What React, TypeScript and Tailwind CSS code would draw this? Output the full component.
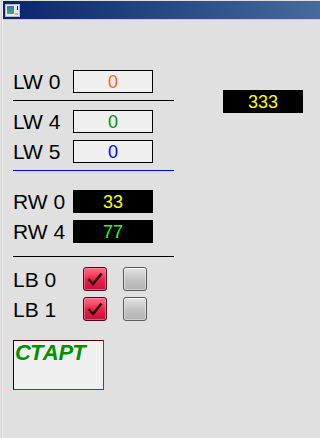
const font = { fontFamily: '"Liberation Sans", Arial, sans-serif' };

function TitleIcon() {
  return (
    <svg width="15" height="13" viewBox="0 0 15 13" className="block">
      <defs>
        <linearGradient id="ig" x1="0" y1="0" x2="0" y2="1">
          <stop offset="0" stopColor="#3a78a8" />
          <stop offset="1" stopColor="#4aa870" />
        </linearGradient>
      </defs>
      <rect x="0.5" y="0.5" width="14" height="12" fill="#e8e8ec" stroke="#b8bcc4" />
      <rect x="2" y="2" width="7" height="8" fill="url(#ig)" />
      <rect x="10" y="9" width="3" height="2" fill="#b0b4b8" />
      <rect x="12" y="2" width="1" height="4" fill="#102040" />
    </svg>
  );
}

function RedCheck() {
  return (
    <div className="w-[24px] h-[24px] rounded-[3px] border border-[#4a0a16] bg-gradient-to-b from-[#ff6a88] via-[#f0204c] to-[#c8103a] shadow-[inset_0_0_0_1px_rgba(255,160,180,0.5)] flex items-center justify-center">
      <svg width="20" height="20" viewBox="0 0 20 20">
        <path d="M3.5 10 L8 15 L16.5 4.5" fill="none" stroke="#22080c" strokeWidth="2.6" />
      </svg>
    </div>
  );
}

function GreyCheck() {
  return (
    <div className="w-[24px] h-[24px] rounded-[3px] border border-[#5a5a5a] bg-gradient-to-b from-[#e4e4e4] via-[#c4c4c4] to-[#b4b4b4] shadow-[inset_0_1px_0_#f8f8f8,inset_0_0_0_1px_rgba(255,255,255,0.4)]" />
  );
}

function Row({ label, children }: { label: string; children: React.ReactNode }) {
  return (
    <div className="flex items-center h-[23px]">
      <div className="w-[60px] text-[21px] leading-none text-black">{label}</div>
      {children}
    </div>
  );
}

function LightBox({ value, color }: { value: string; color: string }) {
  return (
    <div className="w-[80px] h-[23px] border border-black bg-[#f0f0f0] flex items-center justify-center text-[18px] leading-none">
      <span className={color}>{value}</span>
    </div>
  );
}

function DarkBox({ value, color }: { value: string; color: string }) {
  return (
    <div className="w-[80px] h-[23px] bg-black flex items-center justify-center text-[18px] leading-none">
      <span className={color}>{value}</span>
    </div>
  );
}

export default function App() {
  return (
    <div className="w-[320px] h-[438px] bg-[#e0e0e0] flex overflow-hidden" style={font}>
      <div className="w-[3px] h-full flex">
        <div className="w-px bg-[#e6e6e6]" />
        <div className="w-px bg-[#d4d0c8]" />
        <div className="w-px bg-[#f4f4f4]" />
      </div>
      <div className="flex-1 flex flex-col">
        <div className="mt-px h-[18px] bg-gradient-to-r from-[#0a246a] to-[#476a9e] flex items-center pl-[2px]">
          <TitleIcon />
        </div>
        <div className="h-px bg-[#c8c8c8]" />
        <div className="flex">
          <div className="ml-[10px] w-[161px] flex flex-col">
            <div className="mt-[50px]">
              <Row label="LW 0">
                <LightBox value="0" color="text-[#ff6620]" />
              </Row>
            </div>
            <div className="mt-[7px] h-px bg-black" />
            <div className="mt-[9px]">
              <Row label="LW 4">
                <LightBox value="0" color="text-[#009000]" />
              </Row>
            </div>
            <div className="mt-[7px]">
              <Row label="LW 5">
                <LightBox value="0" color="text-[#0000ff]" />
              </Row>
            </div>
            <div className="mt-[7px] h-px bg-[#0000ff]" />
            <div className="mt-[19px]">
              <Row label="RW 0">
                <DarkBox value="33" color="text-[#ffff00]" />
              </Row>
            </div>
            <div className="mt-[7px]">
              <Row label="RW 4">
                <DarkBox value="77" color="text-[#22ff22]" />
              </Row>
            </div>
            <div className="mt-[13px] h-px bg-black" />
            <div className="mt-[10px] flex items-center h-[24px]">
              <div className="w-[70px] text-[21px] leading-none">LB 0</div>
              <RedCheck />
              <div className="w-[16px]" />
              <GreyCheck />
            </div>
            <div className="mt-[6px] flex items-center h-[24px]">
              <div className="w-[70px] text-[21px] leading-none">LB 1</div>
              <RedCheck />
              <div className="w-[16px]" />
              <GreyCheck />
            </div>
            <div className="mt-[19px] w-[91px] h-[50px] bg-[#f0f0f0] border border-t-[#500000] border-l-[#300000] border-r-[#ff0000] border-b-[#ff0000] pl-[1px]">
              <div className="text-[22px] leading-none font-bold italic text-[#009000] pt-[1px]">СТАРТ</div>
            </div>
          </div>
          <div className="ml-[49px] mt-[70px]">
            <DarkBox value="333" color="text-[#ffff00]" />
          </div>
        </div>
      </div>
    </div>
  );
}
